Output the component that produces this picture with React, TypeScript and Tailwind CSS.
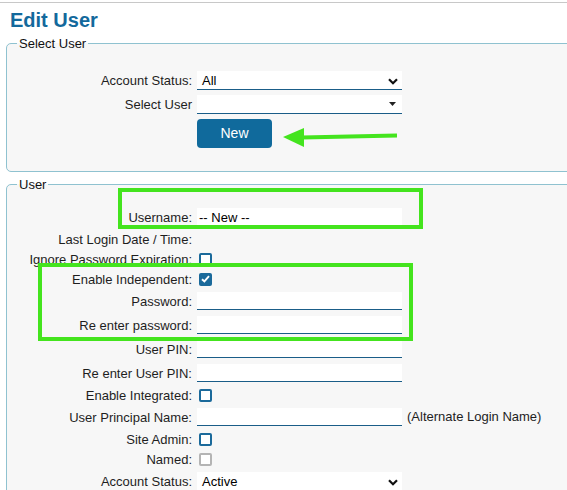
import React from "react";

const BLUE = "#13699c";

function Chevron() {
  return (
    <svg width="10" height="7" viewBox="0 0 10 7" className="absolute right-[4px] top-[7px]">
      <path d="M1 1.2 L5 5.2 L9 1.2" fill="none" stroke="#111" strokeWidth="2.2" />
    </svg>
  );
}

function Caret() {
  return (
    <svg width="7" height="4" viewBox="0 0 7 4" className="absolute right-[6px] top-[7px]">
      <path d="M0 0 L7 0 L3.5 4 Z" fill="#222" />
    </svg>
  );
}

function Select({ value, caret }: { value?: string; caret?: boolean }) {
  return (
    <div className="relative w-[205px] h-[19px] bg-white border-b border-[#1a5d88] pl-[5px] leading-[19px] text-[13px] text-black">
      {value}
      {caret ? <Caret /> : <Chevron />}
    </div>
  );
}

function Input({ value }: { value?: string }) {
  return (
    <div className="w-[205px] h-[18px] bg-white border-b border-[#1a5d88] pl-[2px] leading-[19px] text-[13px] text-black">
      {value}
    </div>
  );
}

function Box({ checked, disabled }: { checked?: boolean; disabled?: boolean }) {
  if (checked) {
    return (
      <div className="ml-[2px] w-[13px] h-[13px] rounded-[2px] bg-[#1b6a9b] flex items-center justify-center">
        <svg width="9" height="8" viewBox="0 0 9 8">
          <path d="M1 4.2 L3.4 6.4 L8 1.2" fill="none" stroke="#fff" strokeWidth="1.9" />
        </svg>
      </div>
    );
  }
  return (
    <div
      className={
        disabled
          ? "ml-[2px] w-[13px] h-[13px] rounded-[2px] bg-white border-2 border-[#b4b4b4]"
          : "ml-[2px] w-[13px] h-[13px] rounded-[2px] bg-white border-2 border-[#1b6a9b]"
      }
    />
  );
}

function Row({ label, tall, children }: { label: string; tall?: boolean; children?: React.ReactNode }) {
  return (
    <div className={tall ? "flex items-center h-[24px]" : "flex items-center h-[20px]"}>
      <div className="w-[185px] text-right whitespace-nowrap text-[13px] leading-[15px] text-[#1e1e1e]">{label}</div>
      <div className="ml-[5px] flex items-center">{children}</div>
    </div>
  );
}

export default function App() {
  return (
    <div
      className="relative w-[567px] h-[490px] overflow-hidden bg-white"
      style={{ fontFamily: '"Liberation Sans", Arial, sans-serif' }}
    >
      <div className="pt-[2px]">
        <div className="h-[1px] bg-[#c8c8c8]" />
      </div>
      <h1 className="ml-[10px] mt-[5px] text-[20px] leading-[24px] font-bold text-[#13699c]" style={{ color: BLUE }}>
        Edit User
      </h1>

      <fieldset className="ml-[6px] mt-[4px] w-[620px] border border-[#8fc2d0] rounded-[5px] bg-[#f7f7f7] pt-[17px] pb-[23px]">
        <legend className="ml-[10px] px-[2px] text-[13px] leading-[15px] text-[#111]">Select User</legend>
        <Row label="Account Status:" tall>
          <Select value="All" />
        </Row>
        <Row label="Select User" tall>
          <Select caret />
        </Row>
        <div className="flex mt-[3px]">
          <div className="w-[185px]" />
          <button className="ml-[5px] w-[75px] h-[29px] rounded-[4px] bg-[#106a9c] text-white text-[14px] leading-[29px]">
            New
          </button>
        </div>
      </fieldset>

      <fieldset className="ml-[6px] mt-[5px] w-[620px] border border-[#8fc2d0] rounded-[5px] bg-[#f7f7f7] pt-[13px] pb-[20px]">
        <legend className="ml-[10px] px-[2px] text-[13px] leading-[15px] text-[#111]">User</legend>
        <Row label="Username:" tall>
          <Input value="-- New --" />
        </Row>
        <Row label="Last Login Date / Time:" />
        <Row label="Ignore Password Expiration:">
          <Box />
        </Row>
        <Row label="Enable Independent:">
          <Box checked />
        </Row>
        <Row label="Password:" tall>
          <Input />
        </Row>
        <Row label="Re enter password:" tall>
          <Input />
        </Row>
        <Row label="User PIN:" tall>
          <Input />
        </Row>
        <Row label="Re enter User PIN:" tall>
          <Input />
        </Row>
        <Row label="Enable Integrated:">
          <Box />
        </Row>
        <Row label="User Principal Name:" tall>
          <Input />
          <span className="ml-[5px] text-[13px] text-[#1e1e1e] whitespace-nowrap">(Alternate Login Name)</span>
        </Row>
        <Row label="Site Admin:">
          <Box />
        </Row>
        <Row label="Named:">
          <Box disabled />
        </Row>
        <Row label="Account Status:" tall>
          <Select value="Active" />
        </Row>
      </fieldset>

      {/* annotations */}
      <div className="absolute left-[118px] top-[188px] w-[305px] h-[41px] border-4 border-[#44e41e]" />
      <div className="absolute left-[38px] top-[263px] w-[375px] h-[78px] border-4 border-[#44e41e]" />
      <svg className="absolute left-[280px] top-[125px]" width="120" height="25" viewBox="0 0 120 25">
        <path d="M22 12.5 L117 10.5" stroke="#44e41e" strokeWidth="4" fill="none" />
        <path d="M3 12 L24 3 L24 22 Z" fill="#44e41e" />
      </svg>
    </div>
  );
}
